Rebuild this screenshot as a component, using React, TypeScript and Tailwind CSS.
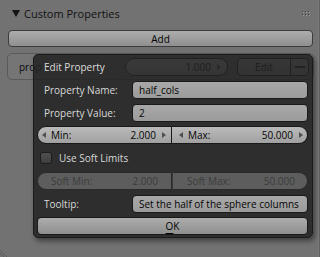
import React from 'react';

const Arrow = ({ dir }: { dir: 'l' | 'r' }) => (
  <svg width="4" height="6" viewBox="0 0 4 6" className="shrink-0">
    <polygon points={dir === 'l' ? '4,0 0,3 4,6' : '0,0 4,3 0,6'} fill="#4f4f4f" />
  </svg>
);

const TextField = ({ value }: { value: string }) => (
  <div className="flex-1 h-[18px] rounded-[4px] border border-[#191919] bg-gradient-to-b from-[#a8a8a8] to-[#9b9b9b] flex items-center pl-[6px] text-[#050505] whitespace-nowrap overflow-hidden">
    {value}
  </div>
);

const Row = ({ label, children }: { label: string; children: React.ReactNode }) => (
  <div className="h-[18px] flex items-center">
    <div className="w-[95px] pl-[7px] text-[#d9d9d9]">{label}</div>
    {children}
  </div>
);

export default function App() {
  return (
    <div className="relative w-[320px] h-[257px] bg-[#727272] overflow-hidden font-['Open_Sans',sans-serif] text-[10px] leading-none flex">
      <div className="flex-1">
        {/* panel header */}
        <div className="h-[26px] flex items-center pl-[12px] pr-[7px]">
          <svg width="8" height="7" viewBox="0 0 8 7" className="mr-[4px]">
            <polygon points="0,0 8,0 4,7" fill="#141414" />
          </svg>
          <span className="text-[11px] text-[#111]">Custom Properties</span>
          <svg width="9" height="5" viewBox="0 0 9 5" className="ml-auto">
            {[0, 3, 6].map((x) =>
              [0, 3].map((y) => (
                <g key={`${x}-${y}`}>
                  <rect x={x} y={y} width="1" height="1" fill="#3e3e3e" />
                  <rect x={x + 1} y={y + 1} width="1" height="1" fill="#9a9a9a" />
                </g>
              ))
            )}
          </svg>
        </div>

        {/* Add */}
        <div className="mt-[4px] ml-[8px] mr-[5px] h-[17px] rounded-[4px] border border-[#3c3c3c] bg-gradient-to-b from-[#adadad] to-[#8f8f8f] flex items-center justify-center text-[#050505]">
          Add
        </div>

        {/* property row (under the popup) */}
        <div className="mt-[6px] ml-[7px] mr-[4px] h-[27px] rounded-[5px] border border-[#5a5a5a] bg-[#757575] flex items-center">
          <div className="w-[117px] pl-[11px] text-[#0a0a0a]">prop</div>
          <div className="w-[103px] h-[18px] rounded-full border border-[#191919] bg-gradient-to-b from-[#b9b9b9] to-[#a0a0a0] flex items-center justify-end pr-[6px] gap-[6px] text-black">
            <span>1.000</span>
            <Arrow dir="r" />
          </div>
          <div className="ml-[9px] w-[72px] h-[18px] rounded-[4px] border border-[#191919] bg-gradient-to-b from-[#adadad] to-[#929292] flex text-black">
            <div className="w-[53px] flex items-center justify-center border-r border-[#191919]">Edit</div>
            <div className="flex-1 flex items-center justify-center">
              <div className="w-[10px] h-[2px] bg-[#222]" />
            </div>
          </div>
        </div>
      </div>

      {/* region edge */}
      <div className="w-[2px] bg-[#606060] border-l border-[#7a7a7a]" />

      {/* area corner */}
      <svg width="7" height="7" viewBox="0 0 7 7" className="absolute left-0 bottom-0">
        <line x1="0" y1="3" x2="4" y2="7" stroke="#5c5c5c" />
        <line x1="0" y1="0" x2="7" y2="7" stroke="#5c5c5c" />
      </svg>

      {/* Edit Property popup */}
      <div className="absolute left-[33px] top-[54px] w-[280px] h-[184px] rounded-[5px] bg-[#222222d9] border border-[#1b1b1b] shadow-[2px_3px_5px_rgba(0,0,0,0.45)] pt-[3px] pl-[3px] pr-[4px] flex flex-col gap-[4.75px]">
        <div className="h-[18px] flex items-center pl-[7px] text-[#dcdcdc]">Edit Property</div>

        <Row label="Property Name:">
          <TextField value="half_cols" />
        </Row>
        <Row label="Property Value:">
          <TextField value="2" />
        </Row>

        <div className="h-[18px] flex">
          <div className="w-[135px] rounded-l-full border border-[#191919] bg-gradient-to-b from-[#bababa] to-[#a1a1a1] flex items-center pl-[4px] pr-[5px] text-[#050505]">
            <Arrow dir="l" />
            <span className="ml-[5px]">Min:</span>
            <span className="ml-auto mr-[6px]">2.000</span>
            <Arrow dir="r" />
          </div>
          <div className="flex-1 rounded-r-full border border-l-0 border-[#191919] bg-gradient-to-b from-[#bababa] to-[#a1a1a1] flex items-center pl-[7px] pr-[4px] text-[#050505]">
            <Arrow dir="l" />
            <span className="ml-[5px]">Max:</span>
            <span className="ml-auto mr-[6px]">50.000</span>
            <Arrow dir="r" />
          </div>
        </div>

        <div className="h-[18px] flex items-center pl-[3px]">
          <div className="w-[12px] h-[12px] rounded-[3px] border border-[#1c1c1c] bg-gradient-to-b from-[#505050] to-[#3e3e3e]" />
          <span className="ml-[7px] text-[#d9d9d9]">Use Soft Limits</span>
        </div>

        <div className="h-[18px] flex text-[#3c3c3c]">
          <div className="w-[135px] rounded-l-full border border-[#2a2a2a] bg-[#5d5d5d] flex items-center pl-[13px] pr-[13px]">
            <span>Soft Min:</span>
            <span className="ml-auto">2.000</span>
          </div>
          <div className="flex-1 rounded-r-full border border-l-[#3a3a3a] border-[#2a2a2a] bg-[#5d5d5d] flex items-center pl-[14px] pr-[12px]">
            <span>Soft Max:</span>
            <span className="ml-auto">50.000</span>
          </div>
        </div>

        <Row label="Tooltip:">
          <TextField value="Set the half of the sphere columns" />
        </Row>

        <div className="h-[18px] rounded-[4px] border border-[#191919] bg-gradient-to-b from-[#adadad] to-[#8e8e8e] flex items-center justify-center text-[#050505]">
          <span>
            <span className="underline underline-offset-[3px]">O</span>K
          </span>
        </div>
      </div>
    </div>
  );
}
